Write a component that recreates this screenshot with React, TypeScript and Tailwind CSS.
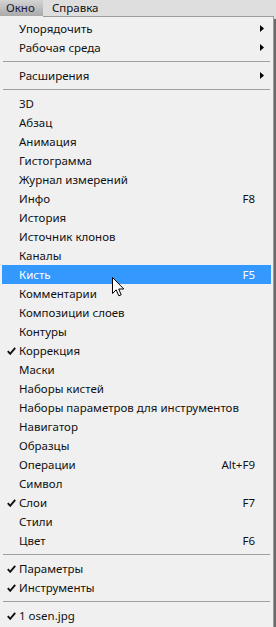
import * as React from 'react';

type Item =
  | { kind: 'sep' }
  | { kind: 'item'; label: string; shortcut?: string; sub?: boolean; checked?: boolean; active?: boolean };

const sep: Item = { kind: 'sep' };
const it = (label: string, extra: Partial<Omit<Extract<Item, { kind: 'item' }>, 'kind' | 'label'>> = {}): Item => ({
  kind: 'item',
  label,
  ...extra,
});

const ITEMS: Item[] = [
  it('Упорядочить', { sub: true }),
  it('Рабочая среда', { sub: true }),
  sep,
  it('Расширения', { sub: true }),
  sep,
  it('3D'),
  it('Абзац'),
  it('Анимация'),
  it('Гистограмма'),
  it('Журнал измерений'),
  it('Инфо', { shortcut: 'F8' }),
  it('История'),
  it('Источник клонов'),
  it('Каналы'),
  it('Кисть', { shortcut: 'F5', active: true }),
  it('Комментарии'),
  it('Композиции слоев'),
  it('Контуры'),
  it('Коррекция', { checked: true }),
  it('Маски'),
  it('Наборы кистей'),
  it('Наборы параметров для инструментов'),
  it('Навигатор'),
  it('Образцы'),
  it('Операции', { shortcut: 'Alt+F9' }),
  it('Символ'),
  it('Слои', { shortcut: 'F7', checked: true }),
  it('Стили'),
  it('Цвет', { shortcut: 'F6' }),
  sep,
  it('Параметры', { checked: true }),
  it('Инструменты', { checked: true }),
  sep,
  it('1 osen.jpg', { checked: true }),
];

function Check({ light }: { light?: boolean }) {
  return (
    <svg width="9" height="8" viewBox="0 0 9 8" className="block">
      <path
        d="M0.8 4.2 L3.2 6.8 L8.2 0.8"
        fill="none"
        stroke={light ? '#fff' : '#111'}
        strokeWidth="1.9"
        strokeLinejoin="miter"
      />
    </svg>
  );
}

function Arrow() {
  return (
    <svg width="4" height="7" viewBox="0 0 4 7" className="block">
      <path d="M0 0 L4 3.5 L0 7 Z" fill="#000" />
    </svg>
  );
}

function Cursor() {
  return (
    <svg width="13" height="21" viewBox="0 0 13 21" className="absolute left-[112px] top-[277px]">
      <path
        d="M0.5 0.5 L0.5 16.5 L4.2 12.8 L6.8 18.8 L9.2 17.8 L6.7 12 L11.8 12 Z"
        fill="#fff"
        stroke="#000"
        strokeWidth="1"
        strokeLinejoin="miter"
      />
    </svg>
  );
}

export default function App() {
  return (
    <div
      className="relative flex h-[627px] w-[276px] overflow-hidden bg-[#f0f0f0] text-[11.5px] text-[#111]"
      style={{ fontFamily: '"Noto Sans", "Open Sans", sans-serif' }}
    >
      <div className="flex w-[274px] flex-col">
        {/* menu bar */}
        <div className="flex h-[17px] shrink-0">
          <div className="flex h-[16px] w-[43px] items-center bg-gradient-to-b from-[#d4d4d4] to-[#a9a9a9] pl-[6px] leading-[16px] text-[#1a1a3a]">
            Окно
          </div>
          <div className="flex h-[17px] flex-1 items-start border-b border-[#9c9c9c] bg-[#dedede]">
            <span className="pl-[9px] leading-[16px]">Справка</span>
          </div>
        </div>
        {/* dropdown */}
        <div className="flex flex-1 flex-col border-r border-[#9c9c9c] pt-[2px]">
          {ITEMS.map((item, i) =>
            item.kind === 'sep' ? (
              <div key={i} className="flex h-[9px] shrink-0 items-start px-[3px] pt-[4px]">
                <div className="h-px w-full bg-[#a0a0a0]" />
              </div>
            ) : (
              <div
                key={i}
                className={
                  item.active
                    ? 'mx-[2px] flex h-[19px] shrink-0 items-center bg-[#3399ff] text-white'
                    : 'mx-[2px] flex h-[19px] shrink-0 items-center'
                }
              >
                <div className="flex w-[17px] shrink-0 justify-center pl-[1px]">
                  {item.checked && <Check light={item.active} />}
                </div>
                <span className="flex-1 whitespace-nowrap leading-[19px]">{item.label}</span>
                {item.shortcut && <span className="pr-[16px] leading-[19px]">{item.shortcut}</span>}
                {item.sub && (
                  <span className="pr-[7px]">
                    <Arrow />
                  </span>
                )}
              </div>
            ),
          )}
        </div>
      </div>
      {/* right shadow */}
      <div className="flex w-[2px] flex-col">
        <div className="h-[19px] bg-[#dedede]" />
        <div className="flex-1 bg-[#6a6a6a]" />
      </div>
      <Cursor />
    </div>
  );
}
